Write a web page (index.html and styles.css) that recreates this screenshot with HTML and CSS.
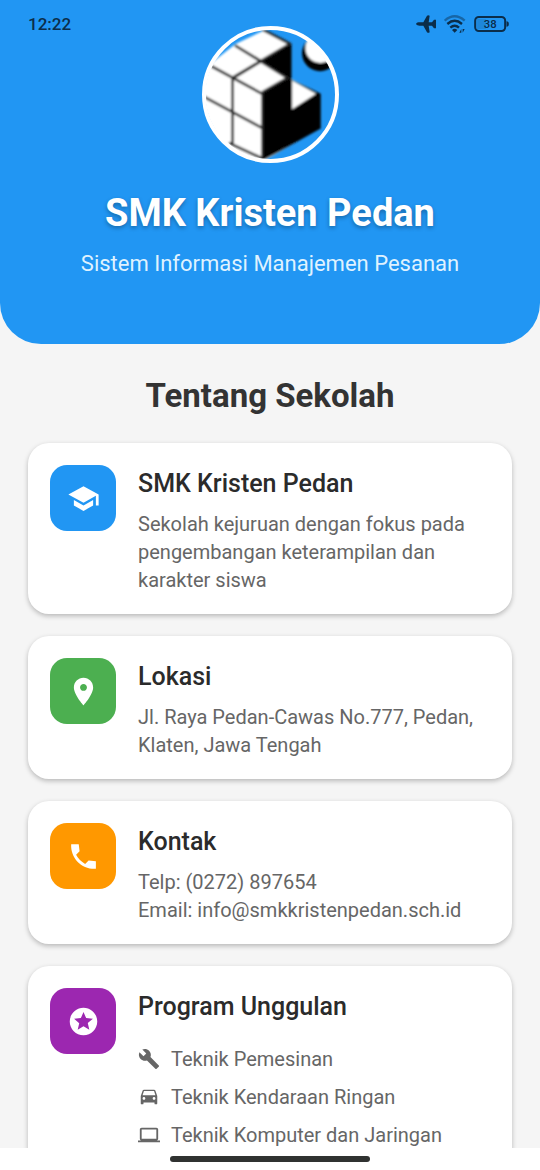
FILE: index.html
```html
<!DOCTYPE html>
<html lang="id">
<head>
<meta charset="utf-8">
<meta name="viewport" content="width=device-width, initial-scale=1">
<title>SMK Kristen Pedan</title>
<link rel="stylesheet" href="styles.css">
</head>
<body>
<div class="screen">
  <div class="status">
    <time class="clock">12:22</time>
    <div class="indicators">
      <svg class="plane" viewBox="0 0 60 54" aria-hidden="true"><path d="M0 27C2 23 6 22 11 22H22L33 2Q37 -1 41 2L38 22H48L54 14H60V40H54L48 32H38L41 52Q37 55 33 52L22 32H11C6 32 2 31 0 27z"/></svg>
      <svg class="wifi" viewBox="0 0 66 54" aria-hidden="true">
        <path class="faint" d="M2 17Q32 -9 62 17"/>
        <path class="arc" d="M10 27Q32 8 54 27"/>
        <path class="arc" d="M19 38Q32 26 45 38"/>
        <path d="M24 45Q32 38 40 45L32 53z"/>
        <path d="M46 53L52 42V53zM56 42V53L62 42z"/>
      </svg>
      <svg class="battery" viewBox="0 0 104 48" aria-hidden="true">
        <rect class="charge" x="9" y="9" width="26" height="30"/>
        <rect class="case" x="3" y="3" width="90" height="42" rx="11"/>
        <path d="M97 16q7 0 7 8t-7 8z"/>
        <text x="48" y="36" text-anchor="middle">38</text>
      </svg>
    </div>
  </div>
  <main class="content">
    <header class="hero">
      <svg class="logo" viewBox="19 18 412 412" role="img" aria-label="Logo SMK Kristen Pedan">
        <defs>
          <clipPath id="disc"><circle cx="225" cy="224" r="196"/></clipPath>
          <filter id="soft" x="0" y="0" width="1" height="1"><feGaussianBlur stdDeviation="3"/></filter>
        </defs>
        <g clip-path="url(#disc)">
          <g filter="url(#soft)">
            <path class="paper" d="M10 150L46 130L120 72L208 30L282 72L284 176L372 222V325L204 424L100 410L10 340z"/>
            <path class="ink" d="M288 70L288 180L376 222V326L206 420L198 418V218L276 174L196 126z"/>
            <path class="paper" d="M290 182L362 222L290 268z"/>
            <path class="paper" d="M118 170L196 126L274 174L200 216z"/>
            <path class="line" d="M200 28L284 72M118 76L196 124M110 174L286 70M42 136L200 222M111 174V376M202 220V420M20 228L202 326M100 370L204 418M120 170L196 124L276 174L200 218"/>
            <circle class="ink" cx="374" cy="100" r="54"/>
            <circle class="paper" cx="375" cy="84" r="45"/>
          </g>
        </g>
        <circle class="ring" cx="225" cy="224" r="200"/>
      </svg>
      <h1 class="name">SMK Kristen Pedan</h1>
      <p class="tagline">Sistem Informasi Manajemen Pesanan</p>
    </header>
    <section class="about">
      <h2 class="heading">Tentang Sekolah</h2>
      <article class="card">
        <div class="tile blue"><svg viewBox="0 0 24 24" aria-hidden="true"><path d="M5 13.18v4L12 21l7-3.82v-4L12 17l-7-3.82zM12 3L1 9l11 6 9-4.91V17h2V9L12 3z"/></svg></div>
        <div class="info">
          <h3 class="title">SMK Kristen Pedan</h3>
          <p class="text">Sekolah kejuruan dengan fokus pada pengembangan keterampilan dan karakter siswa</p>
        </div>
      </article>
      <article class="card">
        <div class="tile green"><svg viewBox="0 0 24 24" aria-hidden="true"><path d="M12 2C8.13 2 5 5.13 5 9c0 5.25 7 13 7 13s7-7.75 7-13c0-3.87-3.13-7-7-7zm0 9.5c-1.38 0-2.5-1.12-2.5-2.5s1.12-2.5 2.5-2.5 2.5 1.12 2.5 2.5-1.12 2.5-2.5 2.5z"/></svg></div>
        <div class="info">
          <h3 class="title">Lokasi</h3>
          <p class="text">Jl. Raya Pedan-Cawas No.777, Pedan, Klaten, Jawa Tengah</p>
        </div>
      </article>
      <article class="card">
        <div class="tile orange"><svg viewBox="0 0 24 24" aria-hidden="true"><path d="M21 15.46l-5.27-.61-2.52 2.52c-2.83-1.44-5.15-3.75-6.59-6.59l2.53-2.53L8.54 3H3.03C2.45 13.18 10.82 21.55 21 20.97v-5.51z"/></svg></div>
        <div class="info">
          <h3 class="title">Kontak</h3>
          <p class="text">Telp: (0272) 897654<br>Email: info@smkkristenpedan.sch.id</p>
        </div>
      </article>
      <article class="card">
        <div class="tile purple"><svg viewBox="0 0 24 24" aria-hidden="true"><path d="M11.99 2C6.47 2 2 6.48 2 12s4.47 10 9.99 10C17.52 22 22 17.52 22 12S17.52 2 11.99 2zm4.24 16L12 15.45 7.77 18l1.12-4.81-3.73-3.23 4.92-.42L12 5l1.92 4.53 4.92.42-3.73 3.23L16.23 18z"/></svg></div>
        <div class="info">
          <h3 class="title">Program Unggulan</h3>
          <ul class="programs">
            <li><svg viewBox="0 0 24 24" aria-hidden="true"><path d="M22.7 19l-9.1-9.1c.9-2.3.4-5-1.5-6.9-2-2-5-2.4-7.4-1.3L9 6 6 9 1.6 4.7C.4 7.1.9 10.1 2.9 12.1c1.9 1.9 4.6 2.4 6.9 1.5l9.1 9.1c.4.4 1 .4 1.4 0l2.3-2.3c.5-.4.5-1.1.1-1.4z"/></svg>Teknik Pemesinan</li>
            <li><svg viewBox="0 0 24 24" aria-hidden="true"><path d="M18.92 5.01C18.72 4.42 18.16 4 17.5 4h-11c-.66 0-1.21.42-1.42 1.01L3 11v8c0 .55.45 1 1 1h1c.55 0 1-.45 1-1v-1h12v1c0 .55.45 1 1 1h1c.55 0 1-.45 1-1v-8l-2.08-5.99zM6.5 15c-.83 0-1.5-.67-1.5-1.5S5.67 12 6.5 12s1.5.67 1.5 1.5S7.33 15 6.5 15zm11 0c-.83 0-1.5-.67-1.5-1.5s.67-1.5 1.5-1.5 1.5.67 1.5 1.5-.67 1.5-1.5 1.5zM5 10l1.5-4.5h11L19 10H5z"/></svg>Teknik Kendaraan Ringan</li>
            <li><svg viewBox="0 0 24 24" aria-hidden="true"><path d="M20 18c1.1 0 1.99-.9 1.99-2L22 6c0-1.1-.9-2-2-2H4c-1.1 0-2 .9-2 2v10c0 1.1.9 2 2 2H0v2h24v-2h-4zM4 6h16v10H4V6z"/></svg>Teknik Komputer dan Jaringan</li>
          </ul>
        </div>
      </article>
    </section>
  </main>
  <div class="gesture"><span class="handle"></span></div>
</div>
</body>
</html>
```
FILE: styles.css
```css
* { box-sizing: border-box; }

body {
  margin: 0;
  font-family: Roboto, "Liberation Sans", sans-serif;
  background: #f5f5f5;
}

h1, h2, h3, p, ul { margin: 0; padding: 0; }

svg { display: block; flex: none; }

.screen {
  position: relative;
  display: flex;
  flex-direction: column;
  height: 100vh;
}

.status {
  position: absolute;
  top: 0;
  left: 0;
  right: 0;
  display: flex;
  align-items: center;
  justify-content: space-between;
  height: 48px;
  padding: 0 31px 0 28px;
  color: #0b2d4a;
  fill: #0b2d4a;
}

.clock { font-size: 17px; font-weight: 500; }

.indicators { display: flex; align-items: center; gap: 8px; }
.plane { width: 20px; height: 18px; }
.wifi { width: 22px; height: 18px; }
.battery { width: 35px; height: 16px; }

.wifi .arc, .wifi .faint { fill: none; stroke: #0b2d4a; stroke-width: 7; }
.wifi .faint { opacity: 0.45; }
.battery .case { fill: none; stroke: #0b2d4a; stroke-width: 6; }
.battery .charge { opacity: 0.15; }
.battery text { font-size: 34px; font-weight: 500; }

.content { flex: 1; min-height: 0; overflow: hidden; }

.hero {
  display: flex;
  flex-direction: column;
  align-items: center;
  padding: 26px 28px 65px;
  border-radius: 0 0 41px 41px;
  background: #2196f3;
  text-align: center;
}

.logo { width: 137px; height: 137px; }
.logo .paper { fill: #fff; }
.logo .ink { fill: #000; }
.logo .line { fill: none; stroke: #222; stroke-width: 8; }
.logo .ring { fill: none; stroke: #fff; stroke-width: 12; }

.name {
  margin-top: 27px;
  font-size: 38px;
  font-weight: 700;
  line-height: 46px;
  color: #fff;
  text-shadow: 0 2px 4px rgba(0, 0, 0, 0.3);
}

.tagline {
  margin-top: 13px;
  font-size: 22px;
  line-height: 30px;
  color: #dff2ff;
}

.about {
  display: flex;
  flex-direction: column;
  gap: 22px;
  padding: 31px 28px;
}

.heading {
  margin-bottom: 4px;
  font-size: 33px;
  font-weight: 700;
  line-height: 42px;
  text-align: center;
  color: #333;
}

.card {
  display: flex;
  align-items: flex-start;
  gap: 22px;
  padding: 22px 22px 20px;
  border-radius: 21px;
  background: #fff;
  box-shadow: 0 2px 5px rgba(0, 0, 0, 0.25);
}

.tile {
  display: grid;
  flex: none;
  place-items: center;
  width: 66px;
  height: 66px;
  border-radius: 17px;
  fill: #fff;
}

.tile svg { width: 33px; height: 33px; }

.blue { background: #2196f3; }
.green { background: #4caf50; }
.orange { background: #ff9800; }
.purple { background: #9c27b0; }

.info { flex: 1; min-width: 0; }

.title {
  margin-bottom: 8px;
  font-size: 25px;
  font-weight: 500;
  line-height: 37px;
  color: #2b2b2b;
}

.text {
  font-size: 20px;
  line-height: 28px;
  color: #666;
}

.programs {
  display: flex;
  flex-direction: column;
  gap: 10px;
  padding-top: 12px;
  list-style: none;
}

.programs li {
  display: flex;
  align-items: center;
  gap: 11px;
  font-size: 20px;
  line-height: 28px;
  color: #666;
  fill: #666;
}

.programs svg { width: 22px; height: 22px; }

.gesture {
  display: flex;
  flex: none;
  justify-content: center;
  height: 22px;
  padding-top: 8px;
  background: #fff;
}

.handle {
  width: 37%;
  height: 6px;
  border-radius: 3px;
  background: #303231;
}
```
